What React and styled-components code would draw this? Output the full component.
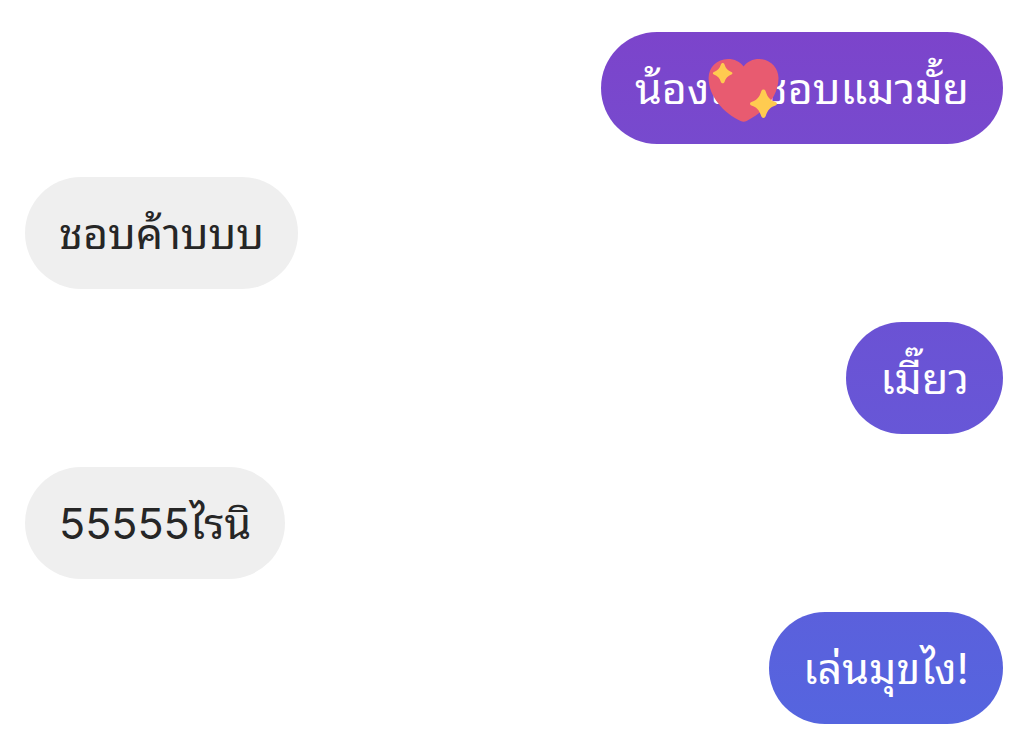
import React from 'react';
import styled, { createGlobalStyle } from 'styled-components';

const GlobalStyle = createGlobalStyle`
  * {
    box-sizing: border-box;
  }

  body {
    margin: 0;
    background-color: #ffffff;
    font-family: Inter, 'Noto Sans Thai Looped', Loma, sans-serif;
  }
`;

const Chat = styled.main`
  display: flex;
  flex-direction: column;
  gap: 33px;
  padding: 32px 21px 16px 25px;
`;

const Bubble = styled.div`
  align-self: ${({ $own }) => ($own ? 'flex-end' : 'flex-start')};
  padding: 0 34px;
  border-radius: 56px;
  background: ${({ $fill }) => $fill || '#efefef'};
  color: ${({ $own }) => ($own ? '#ffffff' : '#262626')};
  font-size: 43px;
  line-height: 112px;
  white-space: nowrap;
`;

const HeartSlot = styled.span`
  position: relative;
  display: inline-block;
  width: 40px;
  height: 28px;
`;

const Heart = styled.svg`
  position: absolute;
  top: 50%;
  left: 50%;
  width: 72px;
  height: 64px;
  transform: translate(-50%, -50%);
`;

const SparklingHeart = () => (
  <HeartSlot>
    <Heart viewBox="0 0 72 64" role="img" aria-label="sparkling heart">
      <path
        fill="#e85b70"
        d="M35.6 8.6C32 3.6 26.5 1 20 1 9 1 .6 9.4.6 20c0 18 14.400 34.600 32 42.900 2.200 1 3.800 1 6 0C56.200 54.600 70.500 38 70.500 20 70.500 9.400 62 1 51.200 1c-6.500 0-12 2.600-15.600 7.600z"
      />
      <path
        fill="#ffcb50"
        d="M23.400 14c-3.600-1.300-5.600-3.300-6.900-7.400-.5-2-3-2-3.600 0-1.300 4.100-3.300 6.100-7 7.400-1.400.5-1.400 2 0 2.500 3.700 1.300 5.700 3.300 7 7.400.6 1.900 3.100 1.900 3.600 0 1.300-4.100 3.300-6.100 6.900-7.400 1.400-.5 1.400-2 0-2.500z"
      />
      <path
        fill="#ffcb50"
        d="M67.400 44c-5.200-1.900-7.800-4.600-9.700-10.600-.8-2.500-3.700-2.500-4.500 0-1.900 6-4.500 8.700-9.700 10.600-2 .7-2 2.700 0 3.400 5.200 1.900 7.800 4.600 9.700 10.600.8 2.500 3.700 2.500 4.500 0 1.900-6 4.500-8.700 9.700-10.600 2-.7 2-2.700 0-3.400z"
      />
    </Heart>
  </HeartSlot>
);

const messages = [
  {
    id: 1,
    text: (
      <>
        น้องเ
        <SparklingHeart />
        ชอบแมวมั้ย
      </>
    ),
    own: true,
    fill: 'linear-gradient(#7c44cb, #774ace)',
  },
  { id: 2, text: 'ชอบค้าบบบ' },
  {
    id: 3,
    text: 'เมี๊ยว',
    own: true,
    fill: 'linear-gradient(#6b52d4, #6757d7)',
  },
  { id: 4, text: '55555ไรนิ' },
  {
    id: 5,
    text: 'เล่นมุขไง!',
    own: true,
    fill: 'linear-gradient(#5b60dc, #5565df)',
  },
];

const App = () => (
  <>
    <GlobalStyle />
    <Chat>
      {messages.map(({ id, text, own, fill }) => (
        <Bubble key={id} $own={own} $fill={fill}>
          {text}
        </Bubble>
      ))}
    </Chat>
  </>
);

export default App;
